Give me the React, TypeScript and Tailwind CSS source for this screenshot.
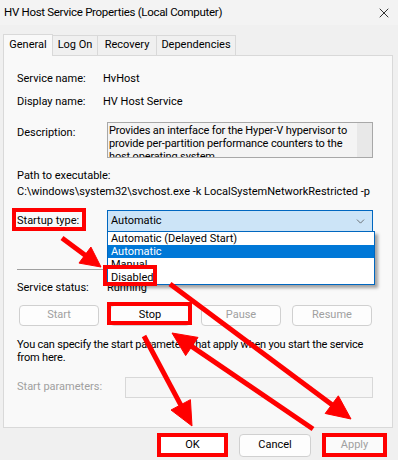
import { ChevronDown, X } from "lucide-react";

type Pt = [number, number];

function Arrow({ from, to, head = 24, half = 11, width = 5 }: { from: Pt; to: Pt; head?: number; half?: number; width?: number }) {
  const dx = to[0] - from[0];
  const dy = to[1] - from[1];
  const len = Math.hypot(dx, dy);
  const ux = dx / len;
  const uy = dy / len;
  const bx = to[0] - ux * head;
  const by = to[1] - uy * head;
  const tri = [
    [to[0], to[1]],
    [bx - uy * half, by + ux * half],
    [bx + uy * half, by - ux * half],
  ]
    .map((p) => p.join(","))
    .join(" ");
  return (
    <g fill="#ff0000" stroke="#ff0000">
      <line x1={from[0]} y1={from[1]} x2={bx + ux * 2} y2={by + uy * 2} strokeWidth={width} />
      <polygon points={tri} strokeWidth={1} />
    </g>
  );
}

function Btn({ label, disabled }: { label: string; disabled?: boolean }) {
  return (
    <div
      className={
        "w-[80px] h-[21px] flex items-center justify-center rounded-[4px] border border-[#d0d0d0] bg-[#fdfdfd] " +
        (disabled ? "text-[#a0a0a0]" : "text-black")
      }
    >
      {label}
    </div>
  );
}

function App() {
  const tabs = ["Log On", "Recovery", "Dependencies"];
  const tabWidths = ["w-[45px]", "w-[59px]", "w-[79px]"];

  return (
    <main className="relative w-[398px] h-[460px] overflow-hidden bg-[#f0f0f0] text-[11px] text-black font-['Roboto','Liberation_Sans',sans-serif]">
      <div className="h-[25px] flex items-center justify-between pl-[4px] pr-[6px] bg-[#f3f3f3] text-[11.5px] tracking-[-0.3px]">
        <span>HV Host Service Properties (Local Computer)</span>
        <X size={16} strokeWidth={1.2} />
      </div>

      <div className="flex items-end h-[30px] pl-[3px]">
        <div className="w-[50px] h-[22px] bg-[#f9f9f9] border border-b-0 border-[#d9d9d9] flex items-center justify-center relative z-10 -mb-[1px]">
          General
        </div>
        {tabs.map((t, i) => (
          <div
            key={t}
            className={
              tabWidths[i] +
              " h-[20px] bg-[#f0f0f0] border border-l-0 border-b-0 border-[#d9d9d9] flex items-center justify-center"
            }
          >
            {t}
          </div>
        ))}
      </div>

      <div className="relative ml-[3px] w-[390px] h-[373px] bg-[#f9f9f9] border border-[#d9d9d9] pl-[13px] pr-[18px]">
        <div className="flex h-[18px] items-center mt-[14px]">
          <span className="w-[86px]">Service name:</span>
          <span>HvHost</span>
        </div>
        <div className="flex h-[18px] items-center mt-[5px]">
          <span className="w-[86px]">Display name:</span>
          <span>HV Host Service</span>
        </div>
        <div className="flex mt-[11px]">
          <span className="w-[90px] pt-[3px]">Description:</span>
          <div className="flex w-[266px] h-[36px] border border-[#a8a8a8] bg-[#f4f4f4] overflow-hidden">
            <div className="flex-1 pl-[1px] leading-[13px] pt-[1px] tracking-[-0.15px]">
              Provides an interface for the Hyper-V hypervisor to provide per-partition performance counters to the host operating system.
            </div>
            <div className="w-[15px] bg-[#e8e8e8]" />
          </div>
        </div>
        <div className="h-[16px] flex items-center mt-[10px]">Path to executable:</div>
        <div className="h-[16px] flex items-center whitespace-nowrap">
          C:\windows\system32\svchost.exe -k LocalSystemNetworkRestricted -p
        </div>
        <div className="flex items-center mt-[10px]">
          <span className="w-[90px]">Startup type:</span>
          <div className="w-[266px] h-[22px] flex items-center justify-between pl-[3px] pr-[5px] bg-[#cce4f7] border border-[#0067c0]">
            <span>Automatic</span>
            <ChevronDown size={13} strokeWidth={1.3} className="text-[#444]" />
          </div>
        </div>
        <div className="h-px bg-[#a0a0a0] mt-[37px]" />
        <div className="flex h-[16px] items-center mt-[10px]">
          <span className="w-[90px]">Service status:</span>
          <span>Running</span>
        </div>
        <div className="flex gap-[11px] mt-[9px] pl-[2px]">
          <Btn label="Start" disabled />
          <Btn label="Stop" />
          <Btn label="Pause" disabled />
          <Btn label="Resume" disabled />
        </div>
        <p className="mt-[12px] leading-[13px] tracking-[-0.2px] -mr-[8px]">
          You can specify the start parameters that apply when you start the service from here.
        </p>
        <div className="flex items-center mt-[13px]">
          <span className="w-[108px] text-[#a0a0a0]">Start parameters:</span>
          <div className="w-[248px] h-[21px] border border-[#d8d8d8] bg-[#f6f6f6]" />
        </div>

        <div className="absolute left-[103px] top-[175px] w-[268px] h-[54px] bg-white border border-[#0067c0] shadow-[3px_3px_3px_rgba(0,0,0,0.35)] leading-[13px]">
          <div className="h-[13px] pl-[3px]">Automatic (Delayed Start)</div>
          <div className="h-[13px] pl-[3px] bg-[#0078d7] text-white">Automatic</div>
          <div className="h-[13px] pl-[3px]">Manual</div>
          <div className="h-[13px] pl-[3px]">Disabled</div>
        </div>
      </div>

      <div className="flex justify-end gap-[11px] mt-[6px] pr-[11px]">
        <div className="w-[71px] h-[23px] flex items-center justify-center bg-white">OK</div>
        <div className="w-[72px] h-[23px] flex items-center justify-center rounded-[4px] border border-[#d0d0d0] bg-[#fdfdfd]">
          Cancel
        </div>
        <div className="w-[65px] h-[23px] flex items-center justify-center bg-[#fafafa] text-[#a0a0a0]">Apply</div>
      </div>

      <svg className="absolute left-0 top-0 pointer-events-none" width={398} height={460}>
        <g fill="none" stroke="#ff0000" strokeWidth={4}>
          <rect x={14} y={210} width={70} height={19} />
          <rect x={105} y={267} width={50} height={17} />
          <rect x={109} y={304} width={81} height={19} />
          <rect x={159} y={435} width={67} height={20} />
          <rect x={324} y={435} width={61} height={20} />
        </g>
        <Arrow from={[62, 238]} to={[101, 267]} head={20} half={10} />
        <Arrow from={[170, 284]} to={[351, 419]} />
        <Arrow from={[144, 336]} to={[192, 426]} />
        <Arrow from={[313, 429]} to={[172, 333]} />
      </svg>
    </main>
  );
}

export default App;
